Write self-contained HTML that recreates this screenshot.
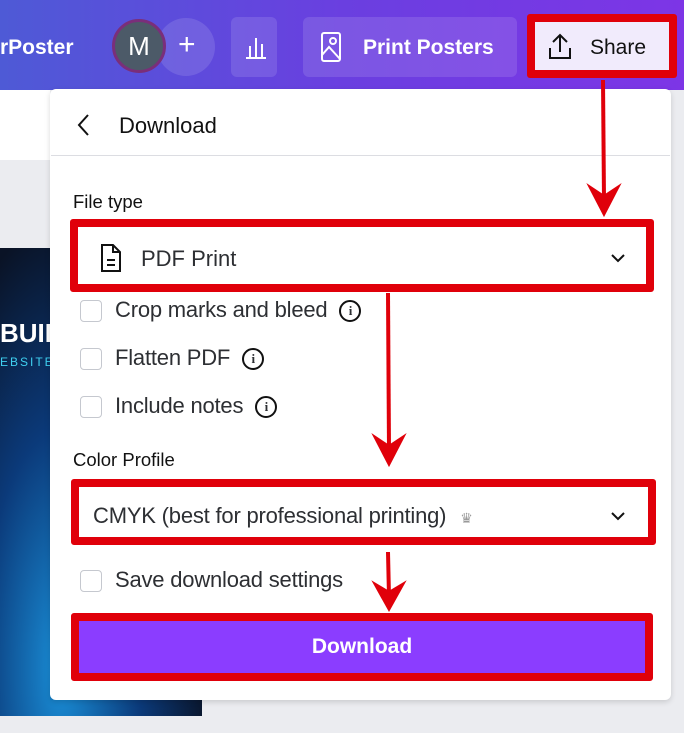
<!DOCTYPE html>
<html><head><style>
body{margin:0;width:684px;height:733px;overflow:hidden;position:relative;font-family:"Liberation Sans",sans-serif;background:#ebecf0}
.abs{position:absolute}
.hdr{left:0;top:0;width:684px;height:90px;background:linear-gradient(90deg,#4e5ad6,#6a3fe0 50%,#7d35e6)}
.chk{position:absolute;left:80px;width:20px;height:20px;border:1.5px solid #c5c8cf;border-radius:4px;background:#fff}
.lbl{position:absolute;left:115px;font-size:22px;color:#2d2f33;letter-spacing:-0.2px}
.info{display:inline-block;width:18px;height:18px;border:2px solid #111;border-radius:50%;font-size:13px;font-weight:bold;text-align:center;line-height:18px;vertical-align:middle;margin-left:12px;font-family:"Liberation Serif",serif}
.red{position:absolute;border:8px solid #e0000a;box-sizing:border-box;border-radius:3px}
</style></head><body>
<div class="abs hdr"></div>
<div class="abs" style="left:0;top:36px;color:#fff;font-size:21px;font-weight:bold">rPoster</div>
<div class="abs" style="left:157px;top:18px;width:58px;height:58px;border-radius:50%;background:rgba(255,255,255,.12)"></div>
<div class="abs" style="left:112px;top:19px;width:54px;height:54px;border-radius:50%;background:#4c5a68;border:3px solid #7a2e7a;box-sizing:border-box;color:#fff;font-size:26px;text-align:center;line-height:48px">M</div>
<div class="abs" style="left:178px;top:28px;color:#fff;font-size:30px">+</div>
<div class="abs" style="left:231px;top:17px;width:46px;height:60px;border-radius:6px;background:rgba(255,255,255,.12)"></div>
<svg class="abs" style="left:244px;top:32px" width="24" height="28"><path d="M2 26H22M6 26V14M12 26V6M18 26V12" stroke="#fff" stroke-width="2" fill="none"/></svg>
<div class="abs" style="left:303px;top:17px;width:214px;height:60px;border-radius:6px;background:rgba(255,255,255,.12)"></div>
<svg class="abs" style="left:320px;top:31px" width="24" height="32"><rect x="2" y="2" width="18" height="28" rx="2" stroke="#fff" stroke-width="2" fill="none"/><circle cx="13" cy="10" r="3" stroke="#fff" stroke-width="2" fill="none"/><path d="M2 24L9 16L20 28" stroke="#fff" stroke-width="2" fill="none"/></svg>
<div class="abs" style="left:363px;top:36px;color:#fff;font-size:21px;font-weight:bold">Print Posters</div>
<div class="abs" style="left:527px;top:14px;width:150px;height:64px;background:#e0000a;border-radius:3px"></div>
<div class="abs" style="left:535px;top:22px;width:134px;height:48px;background:#f1ebfc"></div>
<svg class="abs" style="left:547px;top:32px" width="26" height="28"><path d="M13 20V3M6 10L13 3L20 10M3 16V26H23V16" stroke="#111" stroke-width="2" fill="none"/></svg>
<div class="abs" style="left:590px;top:36px;color:#111;font-size:21px">Share</div>
<div class="abs" style="left:0;top:90px;width:50px;height:70px;background:#fff"></div>
<div class="abs" style="left:0;top:248px;width:202px;height:468px;background:radial-gradient(ellipse at 30% 90%,#1a8fd8,#0b3a7a 40%,#0a1326 75%)"></div>
<div class="abs" style="left:0;top:318px;color:#fff;font-size:26px;font-weight:bold">BUILI</div>
<div class="abs" style="left:0;top:355px;color:#3fd0f0;font-size:12px;letter-spacing:2px">EBSITE</div>
<div class="abs" style="left:50px;top:89px;width:621px;height:611px;background:#fff;border-radius:6px;box-shadow:0 2px 6px rgba(0,0,0,.15)"></div>
<svg class="abs" style="left:76px;top:113px" width="16" height="24"><path d="M12 2L3 12L12 22" stroke="#111" stroke-width="2" fill="none"/></svg>
<div class="abs" style="left:119px;top:113px;font-size:22px;color:#111">Download</div>
<div class="abs" style="left:51px;top:155px;width:619px;height:1px;background:#dcdde2"></div>
<div class="abs" style="left:73px;top:191px;font-size:18.5px;color:#111">File type</div>
<div class="red" style="left:70px;top:219px;width:584px;height:73px"></div>
<svg class="abs" style="left:100px;top:243px" width="22" height="30"><path d="M2 2H13L20 9V28H2Z M13 2V9H20 M7 17H15M7 22H15" stroke="#111" stroke-width="2" fill="none"/></svg>
<div class="abs" style="left:141px;top:246px;font-size:22px;color:#2d2f33">PDF Print</div>
<svg class="abs" style="left:610px;top:252px" width="16" height="12"><path d="M2 3L8 9L14 3" stroke="#111" stroke-width="2" fill="none"/></svg>
<div class="chk" style="top:300px"></div><div class="lbl" style="top:297px">Crop marks and bleed<span class="info">i</span></div>
<div class="chk" style="top:348px"></div><div class="lbl" style="top:345px">Flatten PDF<span class="info">i</span></div>
<div class="chk" style="top:396px"></div><div class="lbl" style="top:393px">Include notes<span class="info">i</span></div>
<div class="abs" style="left:73px;top:449px;font-size:18.5px;color:#111">Color Profile</div>
<div class="red" style="left:71px;top:479px;width:585px;height:66px"></div>
<div class="abs" style="left:93px;top:503px;font-size:22px;color:#2d2f33;letter-spacing:-0.2px">CMYK (best for professional printing) <span style="color:#999;font-size:14px;margin-left:8px">♛</span></div>
<svg class="abs" style="left:610px;top:510px" width="16" height="12"><path d="M2 3L8 9L14 3" stroke="#111" stroke-width="2" fill="none"/></svg>
<div class="chk" style="top:570px"></div><div class="lbl" style="top:567px">Save download settings</div>
<div class="red" style="left:71px;top:613px;width:582px;height:68px;background:#8b3dff"></div>
<div class="abs" style="left:71px;top:635px;width:582px;text-align:center;color:#fff;font-size:21px;font-weight:bold">Download</div>
<svg class="abs" style="left:0;top:0" width="684" height="733">
<g fill="#e0000a" stroke="#e0000a">
<path d="M603 80L604 200" stroke-width="4"/><path d="M589 186L604 215L619 186L604 196Z" stroke-width="2"/>
<path d="M388 293L389 450" stroke-width="4"/><path d="M374 436L389 465L404 436L389 446Z" stroke-width="2"/>
<path d="M388 552L389 597" stroke-width="4"/><path d="M374 583L389 610L404 583L389 592Z" stroke-width="2"/>
</g></svg>
</body></html>
